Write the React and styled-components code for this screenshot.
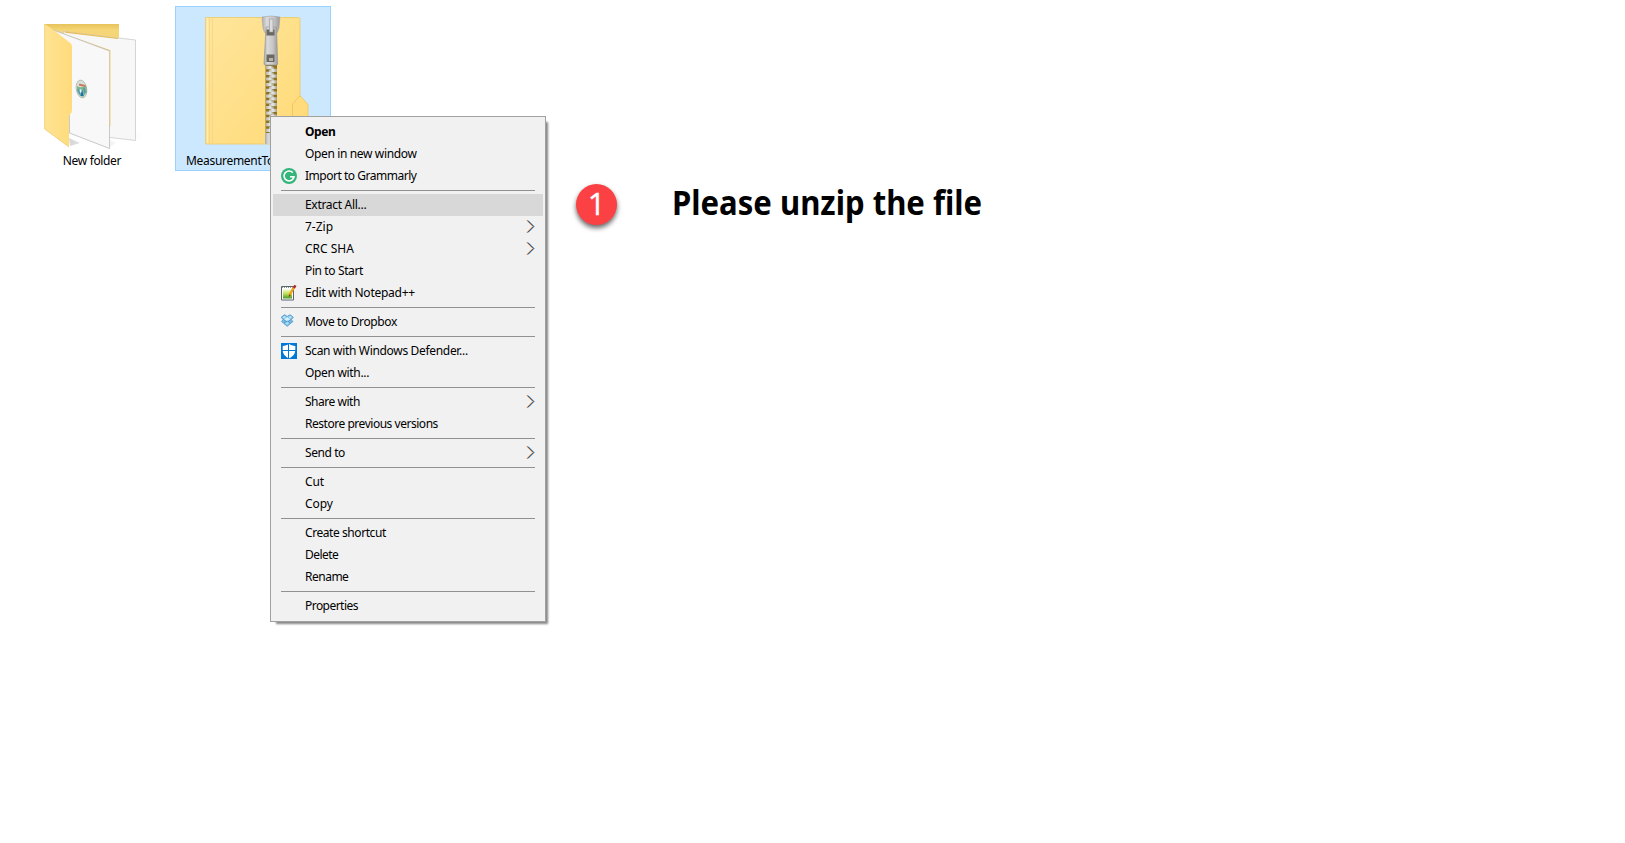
import React from "react";
import styled, { createGlobalStyle } from "styled-components";

const GlobalStyle = createGlobalStyle`
  body { margin: 0; background: #fff; overflow: hidden; }
  * { box-sizing: border-box; }
`;

const Desktop = styled.main`
  position: relative;
  display: flex;
  align-items: flex-start;
  height: 843px;
  padding: 6px 0 0 14px;
  font-family: "Noto Sans", "Open Sans", sans-serif;
  color: #000;
`;

const Tiles = styled.div`
  display: flex;
  gap: 5px;
`;

const Tile = styled.div`
  display: flex;
  flex-direction: column;
  width: 156px;
  height: 165px;
  border: 1px solid ${(p) => (p.$selected ? "#99d1ff" : "transparent")};
  background: ${(p) => (p.$selected ? "#cce8ff" : "transparent")};
`;

const TileArt = styled.svg`
  display: block;
  width: 154px;
  height: 144px;
  flex: none;
`;

const TileLabel = styled.div`
  height: 19px;
  line-height: 20px;
  font-size: 12px;
  white-space: nowrap;
  letter-spacing: ${(p) => p.$track || 0}px;
  text-align: ${(p) => (p.$start ? "left" : "center")};
  padding-left: ${(p) => (p.$start ? 10 : 0)}px;
`;

const Callout = styled.section`
  display: flex;
  align-items: flex-start;
  gap: 55px;
  margin: 178px 0 0 245px;
`;

const Badge = styled.div`
  display: flex;
  align-items: center;
  justify-content: center;
  width: 41px;
  height: 41px;
  border-radius: 50%;
  background: #fc4144;
  color: #fff;
  font: 400 31px/41px "Open Sans", sans-serif;
  -webkit-text-stroke: 0.4px #fff;
  padding-bottom: 2px;
  box-shadow: 0 3px 5px rgba(0, 0, 0, 0.6);
`;

const Heading = styled.h1`
  margin: 0;
  font: 700 34px/36px "Noto Sans", "Open Sans", sans-serif;
  white-space: nowrap;
  transform: scaleX(0.914);
  transform-origin: left;
`;

const Menu = styled.div`
  position: absolute;
  left: 270px;
  top: 116px;
  width: 276px;
  padding: 4px 2px;
  border: 1px solid #a0a0a0;
  background: #f1f1f1;
  box-shadow: 4px 4px 2px -2px rgba(0, 0, 0, 0.48);
`;

const Item = styled.div`
  display: flex;
  align-items: center;
  height: 22px;
  padding: 0 8px;
  background: ${(p) => (p.$active ? "#d8d8d8" : "transparent")};
`;

const IconSlot = styled.span`
  display: flex;
  width: 24px;
  flex: none;
`;

const ItemText = styled.span`
  flex: 1;
  font-size: 12px;
  line-height: 20px;
  padding-bottom: 1px;
  white-space: nowrap;
  font-weight: ${(p) => (p.$bold ? 700 : 400)};
  letter-spacing: ${(p) => p.$track ?? -0.3}px;
`;

const Separator = styled.div`
  height: 1px;
  margin: 3px 8px;
  background: #919191;
`;

const Grammarly = () => (
  <svg width="16" height="16" viewBox="0 0 16 16">
    <circle cx="8" cy="8" r="8" fill="#35b57a" />
    <path d="M11.800 4.600A5 5 0 1 0 13 8.800H9M12.600 8.800q-.3 1.800-1.300 2.900" fill="none" stroke="#fff" strokeWidth="1.600" />
  </svg>
);

const Notepad = () => (
  <svg width="16" height="16" viewBox="0 0 16 16">
    <defs>
      <linearGradient id="np" x2="0" y2="1">
        <stop stopColor="#f9ffe8" /><stop offset=".5" stopColor="#bedf52" /><stop offset="1" stopColor="#47992a" />
      </linearGradient>
    </defs>
    <path d="M.5 1.500h12v13.500H.5z" fill="#fff" stroke="#5c6468" />
    <path d="M2 4h9v9.500H2z" fill="url(#np)" />
    <path d="M1 2.500h11" stroke="#8d9497" strokeDasharray="1 1" />
    <path d="M13 2L8.300 10.700" stroke="#efa51b" strokeWidth="2.500" />
    <path d="M14.500 .4L12.800 3" stroke="#ad2634" strokeWidth="2.400" />
    <path d="M8.200 9.200L7.700 12l2-1.600z" fill="#604315" />
  </svg>
);

const DropboxIcon = styled.svg`
  margin-bottom: 3px;
`;

const Dropbox = () => (
  <DropboxIcon width="13" height="13" viewBox="0 0 13 13">
    <path d="M3.500 .7L6.200 2.500 9 .7l3.300 2.600-2 2.400L12 7.500 9.700 9.300 6.200 12.300 2.700 9.300.500 7.500l1.700-1.800-2-2.400z" fill="#78bfe9" stroke="#4b92c5" strokeWidth=".8" />
    <path d="M6.200 3L9.500 5.400 6.200 7.900 2.900 5.400z" fill="#d5effc" />
    <path d="M2.500 5.500l3.700 2.600 3.700-2.600M3 9l3.200-2 3.200 2" fill="none" stroke="#3f88bf" strokeWidth=".8" />
    <path d="M1.500 3.300l2-1.400L5 3.100 3 4.600zM7.400 3.100L9 1.900l2 1.400-1.500 1.300z" fill="#c2e7fa" />
    <path d="M4 9l2.200-1.500L8.400 9l-2.200 2z" fill="#a6daf5" />
  </DropboxIcon>
);

const Defender = () => (
  <svg width="16" height="16" viewBox="0 0 16 16">
    <path d="M0 0h16v16H0z" fill="#0078d7" />
    <path d="M8 .8C6.200 2.300 4.200 2.700 1.700 2.900v4.400C1.700 11 4.500 13.900 8 15.400c3.500-1.500 6.300-4.400 6.300-8.100V2.900C11.800 2.700 9.800 2.300 8 .8z" fill="#fff" />
    <path d="M7.500 0v16M1 7.500h14" stroke="#0078d7" />
  </svg>
);

const ChevronIcon = styled.svg`
  flex: none;
  margin-bottom: 1px;
`;

const Chevron = () => (
  <ChevronIcon width="9" height="13" viewBox="0 0 9 13">
    <path d="M.9 .5L6.900 6.500 .9 12.500" fill="none" stroke="#e08a40" strokeWidth="1" />
    <path d="M2.200 .5L8.200 6.500 2.200 12.500" fill="none" stroke="#3f95e6" strokeWidth="1" />
    <path d="M1.500 .5L7.500 6.500 1.500 12.500" fill="none" stroke="#4a3c38" strokeWidth=".75" />
  </ChevronIcon>
);

const FolderArt = () => (
  <TileArt viewBox="15 7 154 144">
    <defs>
      <linearGradient id="flap"><stop stopColor="#ffe393" /><stop offset="1" stopColor="#ffdb7b" /></linearGradient>
      <linearGradient id="back" x2="0" y2="1"><stop stopColor="#e8c35c" /><stop offset=".3" stopColor="#f5d575" /></linearGradient>
      <linearGradient id="floor"><stop stopColor="#ccc" stopOpacity=".8" /><stop offset="1" stopColor="#eee" stopOpacity="0" /></linearGradient>
    </defs>
    <path d="M135 132l12 3-10 5h-2zM109 140l7 3-6 4zM69 138l11 5-10 3z" fill="url(#floor)" />
    <path d="M44.500 24H119v20H55z" fill="url(#back)" />
    <path d="M63 31.500L135.500 40v100.500L106 137z" fill="#f7f7f7" stroke="#ccc" strokeWidth=".8" />
    <path d="M65 32.200L118 38.500" stroke="#e9bd54" strokeWidth="1.200" />
    <path d="M52 29.500l58 20.500v77h-1.500V51z" fill="#eccb70" />
    <path d="M52 29.500L109.500 51v97.500L69.500 133V44z" fill="#f8f8f8" stroke="#bbb" strokeWidth=".8" />
    <path d="M110 50v76" stroke="#ecd28a" strokeWidth="1" />
    <path d="M44.500 24l8.800 5.700L69 42q3 1.500 3 5v63q0 3-2 4-1 1-1 4v29l-24.500-18z" fill="url(#flap)" />
    <path d="M44.700 24v105L69 147" fill="none" stroke="#edcc75" strokeWidth=".8" />
    <ellipse cx="81.500" cy="89" rx="5.200" ry="9" fill="#d5e5dc" stroke="#b0b2aa" strokeWidth=".8" transform="rotate(-10 81.5 89)" />
    <path d="M77 86q5 3 9-1l1 7-4 5q-4-1-6-6z" fill="#7eb78c" />
    <path d="M79 84.500l6 1.500" stroke="#cf7760" strokeWidth="2" />
    <path d="M80 89l2 1v4l-3-2z" fill="#e9f6f6" />
    <path d="M82 89l1.500 7h-3z" fill="#176eb2" />
    <path d="M78 89l2 5M84 88l1 5" stroke="#5095b9" strokeWidth="1.400" />
  </TileArt>
);

const teeth = Array.from({ length: 12 }, (_, i) => 66 + i * 5.7);

const ZipArt = () => (
  <TileArt viewBox="176 7 154 144">
    <defs>
      <linearGradient id="zip" x2="1" y2="1"><stop stopColor="#ffe59c" /><stop offset=".5" stopColor="#ffe08a" /><stop offset="1" stopColor="#ffda77" /></linearGradient>
      <linearGradient id="metal"><stop stopColor="#aaa" /><stop offset=".25" stopColor="#d9d9d9" /><stop offset=".65" stopColor="#c6c6c6" /><stop offset="1" stopColor="#999" /></linearGradient>
      <linearGradient id="tooth"><stop stopColor="#b5b5ad" /><stop offset=".5" stopColor="#e9e9e4" /><stop offset="1" stopColor="#a09f92" /></linearGradient>
    </defs>
    <path d="M205.500 17.500H298q2 0 2 2V144h-94.500z" fill="url(#zip)" stroke="#edc866" strokeWidth=".8" />
    <path d="M209.500 18v125M212.500 18v125" stroke="#f4d383" strokeWidth=".7" />
    <path d="M207.500 18v125" stroke="#ffefb6" strokeWidth="1" />
    <path d="M292.500 144v-40l6.500-7.500q1-.7 2 0l7 8V144z" fill="#ffdb7b" stroke="#eec35b" strokeWidth=".8" />
    <path d="M265.500 64h11.500v70h-11.500z" fill="#8e7426" />
    {teeth.map((y) => (
      <React.Fragment key={y}>
        <path d={`M266 ${y}h5l3 1.300v1.900h-8z`} fill="url(#tooth)" />
        <path d={`M277 ${y + 2.800}h-5l-3 1.300v1.900h8z`} fill="url(#tooth)" />
      </React.Fragment>
    ))}
    <path d="M265 133h13v11h-13z" fill="url(#metal)" />
    <path d="M262 17q9-2 18 0l-1 11q-1 4-3 6h-10q-2-2-3-6z" fill="url(#metal)" stroke="#a5a5a5" strokeWidth=".6" />
    <path d="M266 27h10.500l1.200 37q0 1-1.500 1h-11q-1.200 0-1.200-1z" fill="url(#metal)" stroke="#989898" strokeWidth=".7" />
    <path d="M266.500 29.500h8v6h-8zM266.500 54.500h8v7.500h-8z" fill="#6b6763" />
    <path d="M269.500 19h3.500v13h-3.500z" fill="#ddd" stroke="#999" strokeWidth=".6" />
    <path d="M269 58h4v3h-4z" fill="#b8b4a4" />
  </TileArt>
);

const groups = [
  [
    { text: "Open", bold: true, track: -0.4 },
    { text: "Open in new window", track: -0.36 },
    { text: "Import to Grammarly", icon: <Grammarly />, track: -0.48 },
  ],
  [
    { text: "Extract All...", active: true, track: -0.3 },
    { text: "7-Zip", sub: true, track: 0 },
    { text: "CRC SHA", sub: true, track: 0 },
    { text: "Pin to Start", track: -0.38 },
    { text: "Edit with Notepad++", icon: <Notepad />, track: -0.25 },
  ],
  [{ text: "Move to Dropbox", icon: <Dropbox />, track: -0.37 }],
  [
    { text: "Scan with Windows Defender...", icon: <Defender />, track: -0.32 },
    { text: "Open with...", track: -0.32 },
  ],
  [
    { text: "Share with", sub: true, track: -0.48 },
    { text: "Restore previous versions", track: -0.47 },
  ],
  [{ text: "Send to", sub: true, track: -0.42 }],
  [{ text: "Cut", track: -0.1 }, { text: "Copy", track: -0.1 }],
  [
    { text: "Create shortcut", track: -0.43 },
    { text: "Delete", track: -0.52 },
    { text: "Rename", track: -0.5 },
  ],
  [{ text: "Properties", track: -0.54 }],
];

export default function App() {
  return (
    <Desktop>
      <GlobalStyle />
      <Tiles>
        <Tile>
          <FolderArt />
          <TileLabel $track={-0.35}>New folder</TileLabel>
        </Tile>
        <Tile $selected>
          <ZipArt />
          <TileLabel $start $track={-0.3}>MeasurementTo</TileLabel>
        </Tile>
      </Tiles>
      <Callout>
        <Badge>1</Badge>
        <Heading>Please unzip the file</Heading>
      </Callout>
      <Menu>
        {groups.map((items, g) => (
          <React.Fragment key={g}>
            {g > 0 && <Separator />}
            {items.map((it) => (
              <Item key={it.text} $active={it.active}>
                <IconSlot>{it.icon}</IconSlot>
                <ItemText $bold={it.bold} $track={it.track}>{it.text}</ItemText>
                {it.sub && <Chevron />}
              </Item>
            ))}
          </React.Fragment>
        ))}
      </Menu>
    </Desktop>
  );
}
